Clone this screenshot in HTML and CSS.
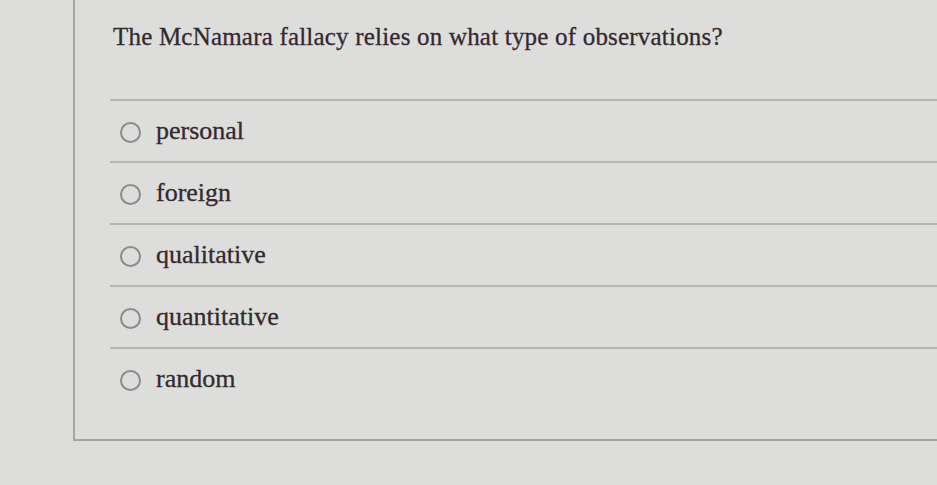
FILE: index.html
```html
<!DOCTYPE html>
<html lang="en">
<head>
    <meta charset="UTF-8">
    <meta name="viewport" content="width=device-width, initial-scale=1.0">
    <title>Question</title>
    <link rel="stylesheet" href="styles.css">
</head>
<body>
    <div class="panel">
        <p class="question">The McNamara fallacy relies on what type of observations?</p>
        <ul class="options">
            <li class="option"><span class="radio"></span><span class="label">personal</span></li>
            <li class="option"><span class="radio"></span><span class="label">foreign</span></li>
            <li class="option"><span class="radio"></span><span class="label">qualitative</span></li>
            <li class="option"><span class="radio"></span><span class="label">quantitative</span></li>
            <li class="option"><span class="radio"></span><span class="label">random</span></li>
        </ul>
    </div>
</body>
</html>
```

FILE: styles.css
```css
body {
    font-family: "Liberation Serif", "Times New Roman", serif;
    background-color: #dddedb;
    color: #33292f;
    margin: 0;
    padding: 0;
    overflow: hidden;
}

.panel {
    margin-left: 73px;
    height: 439px;
    border-left: 2px solid #a7a3a5;
    border-bottom: 2px solid #a7a3a5;
}

.question {
    margin: 0;
    padding: 23px 0 0 38px;
    height: 76px;
    font-size: 25px;
    letter-spacing: 0.2px;
    -webkit-text-stroke: 0.3px #33292f;
}

.options {
    list-style-type: none;
    margin: 0 0 0 35px;
    padding: 0;
}

.option {
    display: flex;
    align-items: center;
    box-sizing: border-box;
    height: 62px;
    border-top: 2px solid #b7b4b5;
    padding-left: 10px;
    padding-top: 2px;
}

.radio {
    width: 17px;
    height: 17px;
    border: 2px solid #8e8a8c;
    border-radius: 50%;
    margin-right: 15px;
}

.label {
    font-size: 26px;
    padding-bottom: 2px;
    -webkit-text-stroke: 0.3px #33292f;
}
```
